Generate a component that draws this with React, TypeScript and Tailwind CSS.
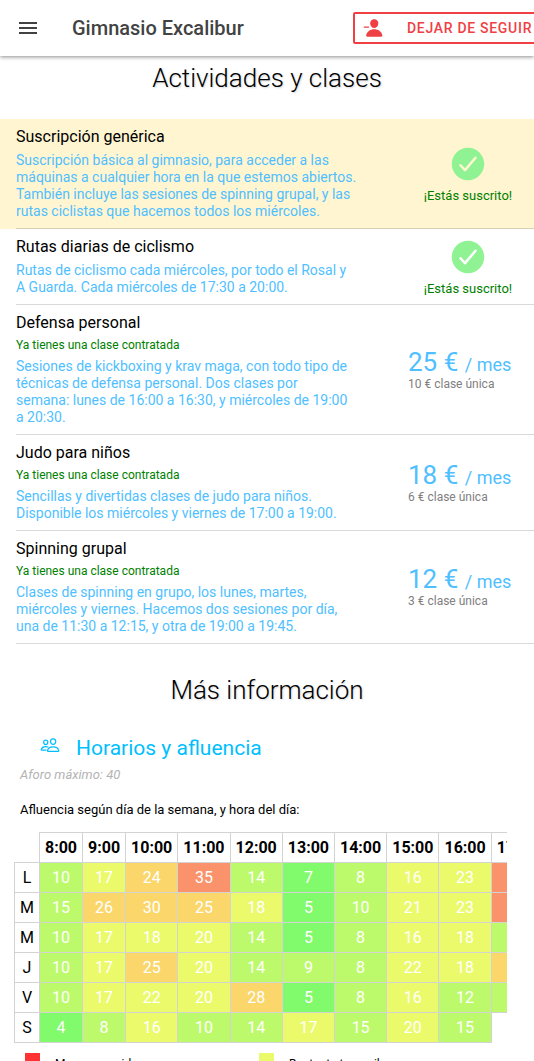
import { IoCheckmarkCircle, IoPeopleOutline, IoPersonRemove } from "react-icons/io5";

type Activity = {
  name: string;
  description: string;
  subscribed?: boolean;
  highlighted?: boolean;
  monthly?: number;
  single?: number;
};

const activities: Activity[] = [
  {
    name: "Suscripción genérica",
    description:
      "Suscripción básica al gimnasio, para acceder a las máquinas a cualquier hora en la que estemos abiertos. También incluye las sesiones de spinning grupal, y las rutas ciclistas que hacemos todos los miércoles.",
    subscribed: true,
    highlighted: true,
  },
  {
    name: "Rutas diarias de ciclismo",
    description:
      "Rutas de ciclismo cada miércoles, por todo el Rosal y A Guarda. Cada miércoles de 17:30 a 20:00.",
    subscribed: true,
  },
  {
    name: "Defensa personal",
    description:
      "Sesiones de kickboxing y krav maga, con todo tipo de técnicas de defensa personal. Dos clases por semana: lunes de 16:00 a 16:30, y miércoles de 19:00 a 20:30.",
    monthly: 25,
    single: 10,
  },
  {
    name: "Judo para niños",
    description:
      "Sencillas y divertidas clases de judo para niños. Disponible los miércoles y viernes de 17:00 a 19:00.",
    monthly: 18,
    single: 6,
  },
  {
    name: "Spinning grupal",
    description:
      "Clases de spinning en grupo, los lunes, martes, miércoles y viernes. Hacemos dos sesiones por día, una de 11:30 a 12:15, y otra de 19:00 a 19:45.",
    monthly: 12,
    single: 3,
  },
];

const hours = ["8:00", "9:00", "10:00", "11:00", "12:00", "13:00", "14:00", "15:00", "16:00", "17:00"];

const week: { day: string; values: number[] }[] = [
  { day: "L", values: [10, 17, 24, 35, 14, 7, 8, 16, 23, 34] },
  { day: "M", values: [15, 26, 30, 25, 18, 5, 10, 21, 23, 34] },
  { day: "M", values: [10, 17, 18, 20, 14, 5, 8, 16, 18, 15] },
  { day: "J", values: [10, 17, 25, 20, 14, 9, 8, 22, 18, 25] },
  { day: "V", values: [10, 17, 22, 20, 28, 5, 8, 16, 12, 15] },
  { day: "S", values: [4, 8, 16, 10, 14, 17, 15, 20, 15] },
];

function loadColor(value: number) {
  if (value < 8) return "bg-[#81fa6b]";
  if (value < 16) return "bg-[#bdfa6b]";
  if (value < 24) return "bg-[#ebfa6b]";
  if (value < 32) return "bg-[#fad66b]";
  return "bg-[#fa936b]";
}

function Header() {
  return (
    <header className="flex h-14 items-center overflow-hidden bg-white shadow-[0_1px_4px_rgba(0,0,0,0.45)]">
      <button type="button" aria-label="Menú" className="ml-4 flex size-6 shrink-0 items-center justify-center text-[#424242]">
        <svg viewBox="0 0 24 24" className="size-6" fill="currentColor" aria-hidden="true">
          <path d="M3 18h18v-2H3v2zm0-5h18v-2H3v2zm0-7v2h18V6H3z" />
        </svg>
      </button>
      <div className="ml-8 grow whitespace-nowrap text-xl font-medium text-[#424242]">Gimnasio Excalibur</div>
      <button
        type="button"
        className="-mr-5 flex h-8 w-[201px] shrink-0 items-center rounded-xs border-2 border-[#ef4044] pl-2 text-sm font-medium tracking-wider whitespace-nowrap text-[#ef4044]"
      >
        <IoPersonRemove className="size-5 shrink-0" />
        <span className="ml-6">DEJAR DE SEGUIR</span>
      </button>
    </header>
  );
}

function SectionTitle({ children }: { children: string }) {
  return (
    <h2 className="text-center text-[26px] leading-8 font-light [text-shadow:1px_1px_2px_#d3d3d3]">{children}</h2>
  );
}

function ActivityRow({ activity }: { activity: Activity }) {
  return (
    <li className={activity.highlighted ? "bg-[#fff5d1] pl-4" : "pl-4"}>
      <div className="flex items-center border-b border-black/15">
        <div className="min-w-0 grow py-2">
          <h3 className="text-base leading-5">{activity.name}</h3>
          {!activity.subscribed && (
            <p className="mt-1 text-xs leading-[17px] text-[#008000]">Ya tienes una clase contratada</p>
          )}
          <p
            className={`text-sm leading-[17px] text-[#50bfff] ${
              activity.subscribed ? "mt-[5px] max-w-[341px]" : "mt-1 max-w-[334px]"
            }`}
          >
            {activity.description}
          </p>
        </div>
        {activity.subscribed ? (
          <div className="flex w-[132px] shrink-0 flex-col items-center text-[13px] leading-4 text-[#008000]">
            <IoCheckmarkCircle className="mb-1 size-10 text-[#90f393]" />
            ¡Estás suscrito!
          </div>
        ) : (
          <div className="w-[134px] shrink-0 pr-4 pl-2">
            <p className="text-[26px] leading-7 whitespace-nowrap text-[#50bfff]">
              {activity.monthly} € <span className="text-lg leading-5">/ mes</span>
            </p>
            <p className="text-xs leading-4 text-[#808080]">{activity.single} € clase única</p>
          </div>
        )}
      </div>
    </li>
  );
}

function Schedule() {
  return (
    <div className="mr-[27px] ml-3.5 overflow-hidden">
      <table className="border-collapse text-base leading-5">
        <thead>
          <tr>
            <td className="w-[25px]" />
            {hours.map((hour) => (
              <th key={hour} scope="col" className="border border-[#d3d3d3] p-[5px] pb-1 font-bold">
                {hour}
              </th>
            ))}
          </tr>
        </thead>
        <tbody>
          {week.map((row, index) => (
            <tr key={index}>
              <th scope="row" className="border border-[#d3d3d3] p-[5px] pb-1 font-normal">
                {row.day}
              </th>
              {row.values.map((value, hour) => (
                <td key={hour} className={`border border-[#d3d3d3] p-[5px] pb-1 text-center text-white ${loadColor(value)}`}>
                  {value}
                </td>
              ))}
            </tr>
          ))}
        </tbody>
      </table>
    </div>
  );
}

export default function App() {
  return (
    <div className="flex h-screen flex-col bg-white font-[Roboto,sans-serif] text-black">
      <div className="z-10 shrink-0">
        <Header />
      </div>
      <main className="min-h-0 grow overflow-x-hidden overflow-y-auto [scrollbar-width:none]">
        <section className="pt-1.5">
          <SectionTitle>Actividades y clases</SectionTitle>
          <ul className="mt-[25px]">
            {activities.map((activity) => (
              <ActivityRow key={activity.name} activity={activity} />
            ))}
          </ul>
        </section>
        <section className="pt-[30px]">
          <SectionTitle>Más información</SectionTitle>
          <div className="mt-7 ml-10 flex items-center gap-4 text-[#00bfff]">
            <IoPeopleOutline className="mb-1.5 size-5" />
            <h3 className="text-[21px] leading-7">Horarios y afluencia</h3>
          </div>
          <p className="mt-[5px] ml-5 text-[13px] leading-4 text-[#b3b3b3] italic">Aforo máximo: 40</p>
          <p className="mt-[19px] mb-[14px] ml-5 text-[13px] leading-4">Afluencia según día de la semana, y hora del día:</p>
          <Schedule />
          <ul className="mt-2.5 ml-[25px] grid grid-cols-[234px_1fr] pb-6 text-xs leading-4">
            <li className="flex items-start gap-[15px]">
              <span className="size-[15px] bg-[#ff3333]" />
              <span className="pt-[3px]">Muy concurrido</span>
            </li>
            <li className="flex items-start gap-[15px]">
              <span className="size-[15px] bg-[#ebfa6b]" />
              <span className="pt-[3px]">Bastante tranquilo</span>
            </li>
          </ul>
        </section>
      </main>
    </div>
  );
}
